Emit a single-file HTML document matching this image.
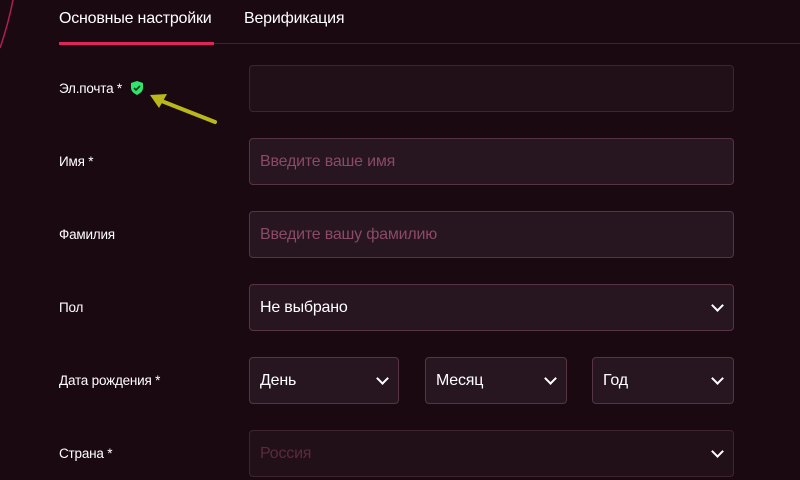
<html><head><style>
body{margin:0;width:800px;height:480px;background:#1b0912;font-family:"Liberation Sans",sans-serif;position:relative;overflow:hidden;color:#fff}
.a{position:absolute}
.tab{font-size:16px;top:10px;letter-spacing:-0.2px}
.lbl{font-size:13.5px;left:59px;letter-spacing:-0.2px}
.in{position:absolute;background:#271520;border:1px solid #573444;border-radius:4px;box-sizing:border-box;height:47px;font-size:16px;line-height:45px;padding-left:10px;color:#fff;letter-spacing:-0.2px}
.ph{color:#8a4a68}
.ch{position:absolute;right:11px;width:7px;height:7px;border-right:2px solid #fff;border-bottom:2px solid #fff;transform:rotate(45deg);top:16px}
</style></head><body>
<svg class="a" style="left:0;top:0" width="30" height="60"><path d="M13 0 Q8 25 0 48" stroke="#b0204e" stroke-width="1.5" fill="none"/></svg>
<div class="a tab" style="left:59px">Основные настройки</div>
<div class="a tab" style="left:244px">Верификация</div>
<div class="a" style="left:59px;top:43px;width:741px;height:1px;background:#3a2530"></div>
<div class="a" style="left:59px;top:42px;width:155px;height:3px;background:#e0245e"></div>
<div class="a lbl" style="top:81px">Эл.почта *</div>
<svg class="a" style="left:129px;top:80px" width="16" height="16" viewBox="0 0 16 16"><path d="M8 1 L14 3 V8 Q14 12 8 15 Q2 12 2 8 V3Z" fill="#2ee66a"/><path d="M5 8 L7 10 L11 6" stroke="#0b3a18" stroke-width="1.6" fill="none"/></svg>
<svg class="a" style="left:145px;top:88px" width="75" height="40"><path d="M70 34 L14 12" stroke="#b8b81c" stroke-width="4" stroke-linecap="round"/><path d="M5 7 L22 6 L14 20Z" fill="#b8b81c"/></svg>
<div class="in" style="left:249px;top:65px;width:485px;background:#221019;border-color:#3e2430"></div>
<div class="a lbl" style="top:154px">Имя *</div>
<div class="in ph" style="left:249px;top:138px;width:485px">Введите ваше имя</div>
<div class="a lbl" style="top:227px">Фамилия</div>
<div class="in ph" style="left:249px;top:211px;width:485px">Введите вашу фамилию</div>
<div class="a lbl" style="top:300px">Пол</div>
<div class="in" style="left:249px;top:284px;width:485px">Не выбрано<span class="ch"></span></div>
<div class="a lbl" style="top:373px">Дата рождения *</div>
<div class="in" style="left:249px;top:357px;width:150px">День<span class="ch"></span></div>
<div class="in" style="left:425px;top:357px;width:142px">Месяц<span class="ch"></span></div>
<div class="in" style="left:592px;top:357px;width:142px">Год<span class="ch"></span></div>
<div class="a lbl" style="top:446px">Страна *</div>
<div class="in" style="left:249px;top:430px;width:485px;background:#221019;border-color:#3e2430;color:#5a2a40">Россия<span class="ch"></span></div>
</body></html>
